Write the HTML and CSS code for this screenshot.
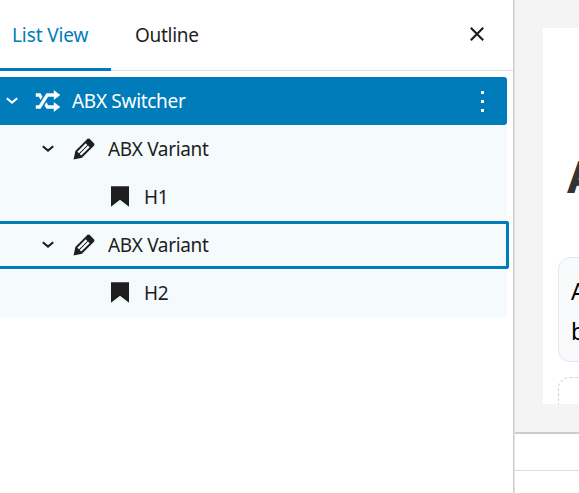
FILE: index.html
```html
<!DOCTYPE html>
<html lang="en">
<head>
<meta charset="utf-8">
<title>List View</title>
<link rel="stylesheet" href="styles.css">
</head>
<body>
<svg class="defs" aria-hidden="true">
  <symbol id="chevron" viewBox="0 0 12 8"><path d="M.8 1.2 6 5.6l5.200-4.400" fill="none" stroke="currentColor" stroke-width="2.100"/></symbol>
  <symbol id="shuffle" viewBox="0 0 20 20"><path d="M18 6.010 14 9V7h-4l-5 8H2v-2h2l5-8h5V3zM2 5h3l1.150 2.170-1.120 1.800L4 7H2zm16 9.010L14 17v-2H9l-1.150-2.170 1.120-1.800L10 13h4v-2z" fill="currentColor" stroke="currentColor" stroke-width=".3"/></symbol>
  <symbol id="pencil" viewBox="0 0 20 20"><path d="M13.890 3.390l2.710 2.720c.46.46.42 1.240.03 1.640l-8.010 8.020-5.560 1.160 1.160-5.580s7.600-7.630 7.990-8.030c.39-.39 1.220-.39 1.680.07zm-2.730 2.790l-5.590 5.610 1.110 1.110 5.540-5.650zm-2.970 8.230l5.580-5.600-1.070-1.080-5.590 5.600z" fill="currentColor"/></symbol>
  <symbol id="bookmark" viewBox="0 0 18 21"><path d="M0 .3h18v20.400L9 13.700 0 20.700z" fill="currentColor"/></symbol>
</svg>
<div class="editor">
  <aside class="sidebar">
    <header class="tabs">
      <div class="tab active"><span class="t-list">List View</span></div>
      <div class="tab"><span class="t-outline">Outline</span></div>
      <svg class="close" viewBox="0 0 14 14"><path d="M.8.8l12.400 12.400M13.200.8.8 13.200" stroke="currentColor" stroke-width="2.200"/></svg>
    </header>
    <div class="tree">
      <div class="row root">
        <svg class="chevron"><use href="#chevron"/></svg>
        <svg class="icon"><use href="#shuffle"/></svg>
        <span class="t-switcher">ABX Switcher</span>
        <span class="dots"><i></i><i></i><i></i></span>
      </div>
      <div class="row variant">
        <svg class="chevron"><use href="#chevron"/></svg>
        <svg class="icon"><use href="#pencil"/></svg>
        <span class="t-variant">ABX Variant</span>
      </div>
      <div class="row leaf">
        <svg class="bookmark"><use href="#bookmark"/></svg>
        <span class="t-h">H1</span>
      </div>
      <div class="row variant focused">
        <svg class="chevron"><use href="#chevron"/></svg>
        <svg class="icon"><use href="#pencil"/></svg>
        <span class="t-variant">ABX Variant</span>
      </div>
      <div class="row leaf">
        <svg class="bookmark"><use href="#bookmark"/></svg>
        <span class="t-h">H2</span>
      </div>
    </div>
  </aside>
  <main class="stage">
    <div class="canvas">
      <div class="page">
        <h1>A</h1>
        <div class="card">A<br>b</div>
        <div class="placeholder"></div>
      </div>
    </div>
    <div class="meta"></div>
    <div class="footer"></div>
  </main>
</div>
</body>
</html>
```
FILE: styles.css
```css
* { box-sizing: border-box; }
body {
  margin: 0;
  overflow: hidden;
  background: #fff;
  color: #1e1e1e;
  font: 19px/24px "Noto Sans", "Open Sans", sans-serif;
}
.defs { position: absolute; width: 0; height: 0; }
.editor { display: flex; width: 579px; height: 493px; overflow: hidden; }
.sidebar { width: 515px; flex: none; border-right: 1px solid #e3e3e3; box-shadow: inset -1px 0 #ccc; }
.tabs { display: flex; height: 71px; margin-right: 1px; border-bottom: 1px solid #ddd; }
.tab { height: 71px; padding: 23px 0 0 24px; white-space: nowrap; }
.tab.active { width: 111px; padding-left: 12px; border-bottom: 3px solid #007cba; color: #007cba; }
.close { width: 14px; height: 14px; margin: 27px 29px 0 auto; }
.t-list { letter-spacing: -0.1px; }
.t-outline { letter-spacing: -0.3px; }
.t-switcher { letter-spacing: -0.3px; }
.t-variant { letter-spacing: -0.35px; }
.t-h { letter-spacing: -0.3px; }
.tree { width: 507px; margin-top: 6px; }
.row { display: flex; align-items: center; height: 48px; background: #f5fafd; white-space: nowrap; }
.root { padding: 0 23px 0 6px; border-radius: 0 3px 3px 0; background: #007cba; color: #fff; }
.variant { padding-left: 42px; }
.leaf { padding-left: 111px; }
.focused { width: 509px; padding-left: 42px; border: solid #007cba; border-width: 3px 3px 3px 0; border-radius: 0 3px 3px 0; }
.chevron { width: 12px; height: 8px; }
.icon { width: 30px; height: 30px; margin: 0 9px 0 15px; }
.bookmark { width: 18px; height: 21px; margin: -1px 15px 0 0; }
.dots { display: flex; flex-direction: column; gap: 6px; margin-left: auto; }
.dots i { width: 3px; height: 3px; background: #fff; }
.stage { flex: 1; min-width: 0; }
.canvas { height: 434px; padding: 28px 0 0 28px; border-bottom: 2px solid #ccc; background: #f4f4f4; }
.page { width: 200px; height: 376px; overflow: hidden; padding: 118px 0 0 15px; background: #fff; }
.page h1 { height: 111px; margin: 0 0 0 9px; color: #333; font: 700 45px/60px "Open Sans", sans-serif; }
.card { height: 105px; padding: 13px 12px; border: 1px solid #e2e8f0; border-radius: 12px; background: #f8fafc; color: #000; font: 23px/40px "Noto Sans", sans-serif; }
.placeholder { height: 60px; margin-top: 15px; border: 1px dashed #cbd5e1; border-radius: 12px; }
.meta { height: 37px; border-bottom: 1px solid #ddd; }
.footer { height: 22px; }
```
